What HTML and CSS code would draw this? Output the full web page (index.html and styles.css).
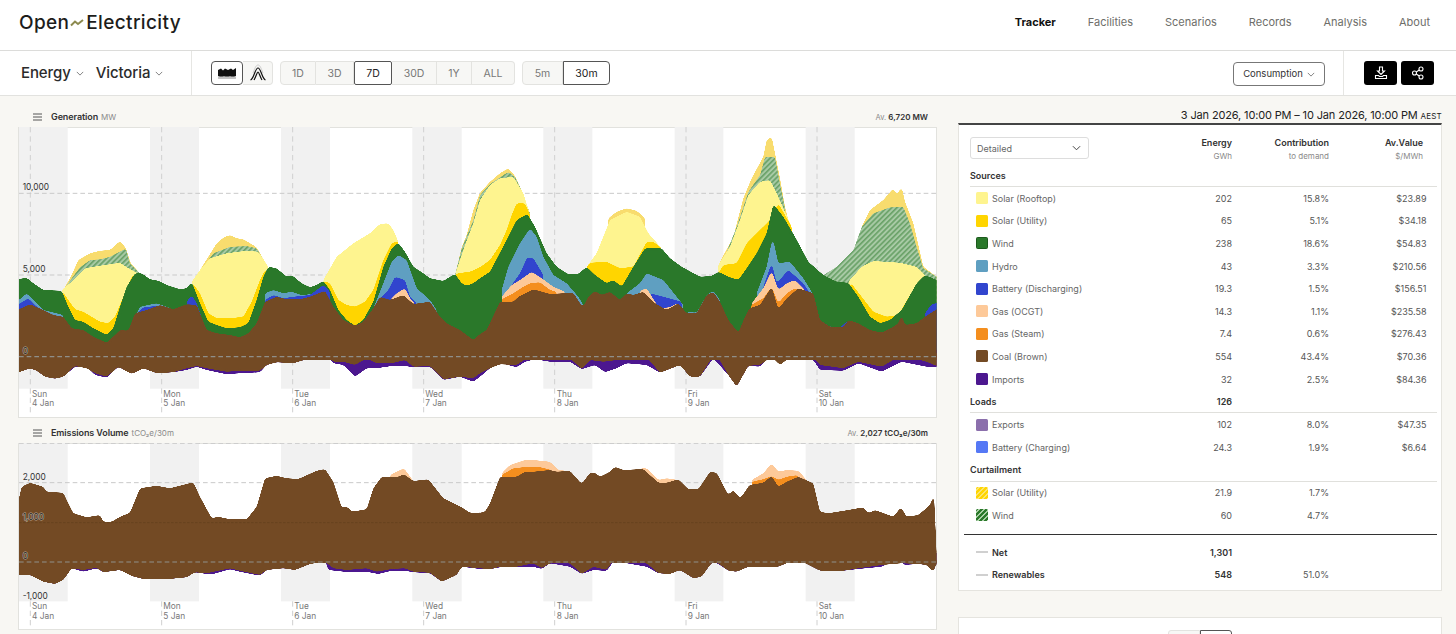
FILE: index.html
```html
<!DOCTYPE html>
<html lang="en">
<head>
<meta charset="utf-8">
<title>Open Electricity Tracker</title>
<link rel="stylesheet" href="styles.css">
</head>
<body>
<header class="topbar">
  <div class="logo">Open<svg class="logo-mark" viewBox="0 0 14 8"><path d="M1 6.500 5 2.500 8 5 13 1" /></svg>Electricity</div>
  <nav class="nav">
    <a class="nav-active">Tracker</a><a>Facilities</a><a>Scenarios</a><a>Records</a><a>Analysis</a><a>About</a>
  </nav>
</header>

<section class="toolbar">
  <div class="selectors">
    <span class="sel">Energy <svg class="chev" viewBox="0 0 10 6"><path d="M1 1 5 5 9 1"/></svg></span>
    <span class="sel">Victoria <svg class="chev" viewBox="0 0 10 6"><path d="M1 1 5 5 9 1"/></svg></span>
  </div>
  <div class="controls">
    <div class="btn-group">
      <button class="btn btn-icon btn-on"><svg width="18" height="13" viewBox="0 0 18 13"><path class="ico-fill" d="M0 3 3 1.500 5 3.500 7 1.500 10 3 13 1.500 15 3 18 1V9L15 10.500 12 9.500 9 10.500 6 9.500 3 10.500 0 9Z"/><path class="ico-grey" d="M0 9.500H18V12H0Z"/></svg></button>
      <button class="btn btn-icon"><svg width="18" height="18" viewBox="0 0 18 18"><path class="ico-line" d="M1.500 16C5 15 6 4 9 4S13 15 16.500 16"/><path class="ico-line" d="M5 16C7 13 8 8 9 8S11 13 13 16"/><path class="ico-pale" d="M4 9C6 4 7 1 9 1S12 4 14 9"/></svg></button>
    </div>
    <div class="btn-group">
      <button class="btn w36">1D</button><button class="btn w38">3D</button><button class="btn w38 btn-on">7D</button><button class="btn w45">30D</button><button class="btn w35">1Y</button><button class="btn w43">ALL</button>
    </div>
    <div class="btn-group">
      <button class="btn w41">5m</button><button class="btn w47 btn-on">30m</button>
    </div>
  </div>
  <button class="consumption">Consumption <svg class="chev" viewBox="0 0 10 6"><path d="M1 1 5 5 9 1"/></svg></button>
  <div class="actions">
    <button class="black-btn"><svg width="14" height="14" viewBox="0 0 14 14"><path class="ico-white" d="M5.500 1H8.500V5H10.500L7 8.500 3.500 5H5.500Z"/><path class="ico-white" d="M1.500 9.500H4.500L5.500 10.500H8.500L9.500 9.500H12.500V12.500H1.500Z"/></svg></button>
    <button class="black-btn"><svg width="14" height="14" viewBox="0 0 14 14"><circle class="ico-white" cx="10" cy="3" r="2"/><circle class="ico-white" cx="3.500" cy="7" r="2"/><circle class="ico-white" cx="10" cy="11" r="2"/><path class="ico-white" d="M5.300 6 8.200 4M5.300 8 8.200 10"/></svg></button>
  </div>
</section>

<main class="main">
  <div class="charts">
    <div class="chart-head head-one">
      <svg class="burger" viewBox="0 0 9 8"><path d="M0 1H9M0 4H9M0 7H9"/></svg>
      <span class="chart-title">Generation</span> <span class="chart-unit">MW</span>
      <span class="chart-av">Av. <b>6,720 MW</b></span>
    </div>
    <div class="chart-panel panel-gen">
      <svg class="chart-svg" width="919" height="291" viewBox="54 21 2757 873">
        <defs>
          <pattern id="hatch" patternUnits="userSpaceOnUse" width="11" height="11" patternTransform="rotate(45)">
            <rect width="11" height="11" fill="#a8caa5"/><rect width="5" height="11" fill="#6aa268"/>
          </pattern>
          <filter id="s" filterUnits="userSpaceOnUse" x="-100" y="0" width="3100" height="1000" color-interpolation-filters="sRGB">
            <feGaussianBlur stdDeviation="5"/>
            <feComponentTransfer><feFuncA type="linear" slope="14" intercept="-6.500"/></feComponentTransfer>
          </filter>
          <filter id="sh" filterUnits="userSpaceOnUse" x="-100" y="0" width="3100" height="1000" color-interpolation-filters="sRGB">
            <feGaussianBlur in="SourceAlpha" stdDeviation="5"/>
            <feComponentTransfer result="edge"><feFuncA type="linear" slope="14" intercept="-6.500"/></feComponentTransfer>
            <feComposite in="SourceGraphic" in2="edge" operator="in"/>
          </filter>
          <clipPath id="cl"><rect x="57" y="0" width="1383" height="1000"/></clipPath>
          <clipPath id="cr"><rect x="30" y="0" width="1370" height="1000"/></clipPath>
        </defs>
        <g class="bands">
          <rect x="57" y="21" width="146" height="785"/><rect x="450" y="21" width="147" height="785"/><rect x="843" y="21" width="147" height="785"/><rect x="1237" y="21" width="148" height="785"/><rect x="1630" y="21" width="147" height="785"/><rect x="2024" y="21" width="146" height="785"/><rect x="2417" y="21" width="147" height="785"/>
        </g>
        <path class="vgrid" d="M91 21V880M485 21V880M878 21V880M1271 21V880M1664 21V880M2058 21V880M2451 21V880"/>
        <path class="hgrid-light" d="M57 220H2808M57 465H2808"/>
        <g clip-path="url(#cl)">
          <path class="c-solarc" filter="url(#s)" d="M190,510 215,465 235,420 270,400 300,392 330,390 360,363 378,385 392,430 420,460V700H190Z M600,450 625,410 650,370 672,352 690,345 710,355 730,358 770,382 800,435V700H600Z M1365,465 1385,382 1400,345 1420,270 1440,218 1480,178V700H1365Z"/>
          <path fill="url(#hatch)" filter="url(#sh)" d="M190,510 215,475 240,442 270,420 300,418 330,410 378,385 390,430 420,460V700H190Z M610,440 640,400 690,380 740,378 770,385 800,435V700H610Z M1365,465 1385,385 1420,300 1440,225 1480,185V700H1365Z"/>
          <path class="c-roof" filter="url(#s)" d="M185,510 215,485 255,445 300,437 360,428 385,445 418,462V700H185Z M575,485 600,450 630,415 680,400 740,392 775,395 805,440V700H575Z M970,480 1010,410 1060,370 1110,340 1140,312 1165,310 1180,330 1195,365V700H970Z M1368,455 1395,375 1420,310 1440,240 1480,190V700H1368Z"/>
          <path class="c-util" filter="url(#s)" d="M185,510 205,540 225,568 250,575 275,590 300,605 325,610 345,590 370,530 395,470 410,460V700H185Z M575,485 600,520 625,580 650,595 690,595 730,590 755,545 780,480 800,440V700H575Z M970,482 990,490 1015,540 1040,555 1065,560 1095,545 1120,510 1150,420 1175,370 1195,362V700H970Z M1365,462 1385,458 1410,455 1440,442 1480,405V700H1365Z"/>
          <path class="c-wind" filter="url(#s)" d="M40,477 57,477 80,473 100,490 130,510 185,512 205,560 225,600 250,605 280,625 320,645 340,625 360,560 380,500 405,460 425,460 450,478 475,482 500,495 540,508 560,505 575,485 600,550 625,605 650,615 680,625 720,622 745,610 770,540 790,470 805,440 830,445 860,470 875,465 905,490 930,502 950,495 970,482 990,510 1015,570 1040,600 1065,617 1090,600 1120,545 1150,440 1175,385 1195,368 1215,395 1240,440 1270,460 1290,475 1330,483 1350,470 1365,462 1385,490 1400,497 1420,490 1440,475 1480,445V700H40Z"/>
          <path class="c-hydro" filter="url(#s)" d="M40,545 57,540 80,520 100,540 130,570 190,585V700H40Z M400,600 420,560 470,550 520,568V700H400Z M795,520 820,510 850,520 875,515 910,527 935,520V700H795Z M1120,565 1150,490 1175,425 1195,405 1220,420 1250,505 1290,540 1310,570V700H1120Z"/>
          <path class="c-batt" filter="url(#s)" d="M40,556 57,552 85,535 110,560 130,570V700H40Z M410,580 430,562 470,558 500,565V700H410Z M560,545 575,525 590,550 615,620V700H560Z M795,540 820,525 850,535 880,530 930,525 970,495 990,515V700H795Z M1140,535 1165,510 1185,470 1215,480 1230,530 1250,550V700H1140Z"/>
          <path class="c-ocgt" filter="url(#s)" d="M1170,540 1190,520 1215,505 1230,535 1245,552V700H1170Z"/>
          <path class="c-imp" filter="url(#s)" d="M40,757 57,757 90,745 110,752 135,770 165,776 190,770 225,740 260,740 285,765 320,773 355,740 395,762 430,745 470,760 520,757 560,750 590,740 620,750 680,763 720,760 780,757 800,735 830,727 880,730 930,715 975,700 1000,730 1030,735 1065,770 1100,745 1130,745 1175,738 1215,738 1240,742 1290,740 1330,780 1380,770 1420,785 1440,770 1480,740V690H40Z"/>
          <path class="c-coal" filter="url(#s)" d="M40,570 57,568 90,553 130,570 160,585 190,590 215,625 250,630 280,650 320,668 345,645 360,630 385,632 405,580 440,570 480,555 520,568 560,553 590,555 620,630 650,640 690,645 720,652 745,640 770,610 795,545 830,530 860,538 900,538 930,530 975,512 1000,560 1030,600 1065,617 1090,605 1120,565 1140,530 1170,540 1210,525 1240,552 1290,545 1320,590 1340,610 1380,630 1420,660 1440,642 1480,625V720H40Z"/>
          <path class="c-coal" filter="url(#s)" d="M40,757 57,757 90,745 110,752 135,770 165,776 190,770 225,738 260,745 285,760 320,770 355,740 395,762 430,745 470,760 520,757 560,745 590,738 620,745 680,755 720,752 780,752 800,735 830,727 880,730 930,715 975,705 1000,725 1030,725 1065,735 1100,715 1130,730 1175,730 1215,720 1240,740 1290,738 1330,778 1380,770 1420,775 1440,760 1480,745V700H40Z"/>
        </g>
        <g transform="translate(1410 0)" clip-path="url(#cr)">
          <path class="c-solarc" filter="url(#s)" d="M-10,330 30,218 60,185 90,160 115,145 135,168 150,200 180,280V700H-10Z M415,295 440,275 470,265 500,272 525,295V700H415Z M745,435 790,350 820,235 845,175 880,110 890,60 905,50 915,100 930,175 945,260 960,320V700H745Z M1175,320 1200,270 1240,240 1270,205 1280,225 1295,200 1305,245 1330,310 1360,440 1400,470 1420,475V700H1175Z"/>
          <path fill="url(#hatch)" filter="url(#sh)" d="M-10,345 30,225 60,192 90,172 115,155 135,170 150,200 180,280V700H-10Z M760,420 800,320 835,215 870,165 885,110 915,110 930,190 945,265V700H760Z M1060,465 1100,440 1135,405 1150,390 1175,320 1210,280 1260,262 1300,260 1320,310 1340,380 1360,445 1400,470 1420,475V700H1060Z"/>
          <path class="c-roof" filter="url(#s)" d="M-10,340 30,240 60,195 90,175 130,170 160,220 180,285V700H-10Z M350,440 380,400 420,300 470,275 510,290 535,340 575,385V700H350Z M745,435 780,380 810,300 835,225 870,185 900,180 920,220 965,320V700H745Z M1135,485 1175,440 1210,423 1290,428 1340,440 1365,465V700H1135Z"/>
          <path class="c-util" filter="url(#s)" d="M-10,455 30,442 60,420 90,375 110,330 125,285 140,250 165,250 180,285V700H-10Z M350,440 360,428 410,425 450,445 490,440 530,365 550,365 575,385V700H350Z M745,460 760,435 800,430 830,370 860,340 900,300 925,250 965,320V700H745Z M1140,485 1175,530 1210,575 1250,590 1285,585 1320,525 1365,462V700H1140Z"/>
          <path class="c-wind" filter="url(#s)" d="M-10,497 30,475 60,455 110,360 140,300 172,282 195,320 230,400 260,440 295,463 325,462 350,440 375,465 410,490 430,480 455,500 490,440 525,385 575,385 600,415 635,440 690,470 725,468 745,455 775,470 805,480 830,445 860,400 890,340 910,252 940,290 975,350 1015,425 1060,465 1100,485 1135,488 1165,530 1200,590 1230,610 1260,600 1295,570 1340,490 1365,465 1400,480 1420,482V700H-10Z"/>
          <path class="c-hydro" filter="url(#s)" d="M95,510 115,440 150,370 180,325 200,350 220,410 250,465 290,490 325,530 340,555V700H95Z M470,520 510,490 530,460 580,480 620,530 640,555V700H470Z M650,575 680,578 710,525 730,512 750,540V700H650Z M860,520 890,440 908,352 925,430 960,425 1000,475 1025,515 1050,600 1080,620 1110,622V700H860Z"/>
          <path class="c-batt" filter="url(#s)" d="M100,530 150,460 172,412 190,415 220,465V700H100Z M540,520 580,530 635,545V700H540Z M880,500 905,428 920,490 955,450 1000,490 1020,520 1050,600 1080,620 1110,623 1135,600V700H880Z M1365,580 1385,552 1400,550 1420,545V700H1365Z"/>
          <path class="c-ocgt" filter="url(#s)" d="M95,530 125,495 150,480 185,455 215,475 250,500 285,515V700H95Z M510,512 530,505 555,545 570,565 600,562 625,548V700H510Z M845,550 880,505 905,452 925,510 950,490 975,480 1005,510V700H845Z"/>
          <path class="c-steam" filter="url(#s)" d="M95,538 130,520 160,500 180,490 210,487 240,510 260,515V700H95Z M843,555 880,535 905,500 925,550 950,520 975,505 1000,510V700H843Z"/>
          <path class="c-imp" filter="url(#s)" d="M-10,785 30,770 60,745 95,730 140,742 165,725 195,718 240,725 300,725 335,748 375,735 405,757 440,745 470,730 530,735 570,758 630,735 660,770 690,770 730,715 775,765 800,800 835,737 870,740 905,700 930,735 960,710 990,705 1030,720 1050,750 1120,752 1165,730 1235,755 1295,725 1370,740 1400,740 1420,740V690H-10Z"/>
          <path class="c-coal" filter="url(#s)" d="M-10,660 30,642 50,630 90,545 130,545 145,530 190,508 240,522 310,518 330,550 340,560 355,530 375,513 395,525 420,515 450,540 470,520 490,525 520,515 555,550 590,570 625,550 650,580 680,580 710,525 730,515 750,545 775,600 805,638 825,590 838,565 870,555 905,500 925,568 950,535 985,505 1030,520 1050,600 1080,620 1120,622 1135,600 1165,610 1200,630 1235,638 1270,620 1285,610 1295,585 1305,615 1340,610 1365,590 1400,568 1420,560V720H-10Z"/>
          <path class="c-coal" filter="url(#s)" d="M-10,775 30,760 60,745 90,733 140,735 170,715 195,708 240,715 300,715 335,748 360,720 400,725 440,720 470,720 530,712 570,758 630,735 660,770 690,770 725,715 740,705 775,765 800,800 835,737 870,735 905,710 930,735 960,712 990,712 1030,712 1050,735 1120,745 1165,725 1235,740 1295,705 1370,725 1400,738 1420,738V700H-10Z"/>
        </g>
        <path class="hgrid-zero" d="M57 710H2808"/>
        <g class="ylab">
          <text x="68" y="210">10,000</text><text x="68" y="455">5,000</text><text class="ylab-halo" x="68" y="701">0</text>
        </g>
        <g class="xlab">
          <text x="96" y="830">Sun</text><text x="96" y="859">4 Jan</text>
          <text x="490" y="830">Mon</text><text x="490" y="859">5 Jan</text>
          <text x="883" y="830">Tue</text><text x="883" y="859">6 Jan</text>
          <text x="1276" y="830">Wed</text><text x="1276" y="859">7 Jan</text>
          <text x="1670" y="830">Thu</text><text x="1670" y="859">8 Jan</text>
          <text x="2063" y="830">Fri</text><text x="2063" y="859">9 Jan</text>
          <text x="2456" y="830">Sat</text><text x="2456" y="859">10 Jan</text>
        </g>
      </svg>
    </div>

    <div class="chart-head head-two">
      <svg class="burger" viewBox="0 0 9 8"><path d="M0 1H9M0 4H9M0 7H9"/></svg>
      <span class="chart-title">Emissions Volume</span> <span class="chart-unit">tCO₂e/30m</span>
      <span class="chart-av">Av. <b>2,027 tCO₂e/30m</b></span>
    </div>
    <div class="chart-panel panel-em">
      <svg class="chart-svg" width="919" height="187" viewBox="54 69 2757 561">
        <g class="bands">
          <rect x="57" y="69" width="146" height="475"/><rect x="450" y="69" width="147" height="475"/><rect x="843" y="69" width="147" height="475"/><rect x="1237" y="69" width="148" height="475"/><rect x="1630" y="69" width="147" height="475"/><rect x="2024" y="69" width="146" height="475"/><rect x="2417" y="69" width="147" height="475"/>
        </g>
        <path class="vgrid" d="M91 544V620M485 544V620M878 544V620M1271 544V620M1664 544V620M2058 544V620M2451 544V620"/>
        <path class="hgrid-light" d="M57 70H2808M57 188H2808"/>
        <g clip-path="url(#cl)">
          <path class="c-ocgt" filter="url(#s)" d="M1170,165 1190,155 1212,145 1240,183V300H1170Z"/>
          <path class="c-imp" filter="url(#s)" d="M40,465 57,465 90,465 130,485 165,492 190,480 215,445 250,455 290,445 310,457 360,450 395,468 430,477 500,478 560,472 585,457 620,462 640,462 690,448 720,455 780,467 800,450 850,445 885,450 930,432 975,420 985,450 1040,456 1100,455 1135,462 1175,452 1215,452 1240,457 1290,460 1325,485 1370,465 1385,440 1440,447 1480,445V420H40Z"/>
          <path class="c-coal" filter="url(#s)" d="M40,300 57,235 65,200 90,188 130,200 140,215 190,218 200,240 220,280 260,292 300,285 310,305 335,305 360,290 390,278 420,205 470,197 510,205 580,187 600,230 635,295 655,290 690,298 740,298 770,260 795,175 830,167 860,175 895,177 950,152 975,147 1000,185 1025,262 1045,262 1055,275 1100,268 1120,205 1145,170 1190,172 1212,163 1240,183 1285,178 1330,235 1385,262 1410,278 1440,278 1480,260V430H40Z"/>
          <path class="c-coal" filter="url(#s)" d="M40,465 57,465 90,465 130,485 165,492 190,480 215,445 250,450 290,443 310,457 360,450 395,468 430,477 500,478 560,472 585,457 620,460 690,445 720,452 780,465 800,450 850,445 885,450 930,432 975,425 1000,445 1040,450 1100,445 1130,455 1175,447 1215,445 1240,455 1290,458 1325,485 1370,465 1385,440 1440,445 1480,448V420H40Z"/>
        </g>
        <g transform="translate(1410 0)" clip-path="url(#cr)">
          <path class="c-ocgt" filter="url(#s)" d="M95,160 120,135 165,120 190,120 240,125 265,150 290,152V300H95Z M510,145 530,145 565,180 590,175 625,180V300H510Z M845,180 880,160 905,130 925,155 950,150 985,152 1010,180V300H845Z"/>
          <path class="c-steam" filter="url(#s)" d="M95,165 130,145 175,140 205,140 245,150V300H95Z M845,185 880,178 905,168 925,180 950,170 985,165V300H845Z"/>
          <path class="c-imp" filter="url(#s)" d="M-10,447 30,447 60,448 90,442 140,442 190,440 215,447 240,430 300,440 335,462 370,450 410,453 430,425 470,430 530,440 565,460 600,462 630,450 670,475 695,470 720,435 730,425 745,432 775,452 800,455 835,440 880,440 925,440 960,425 985,418 1010,432 1050,452 1120,452 1165,447 1235,440 1295,412 1300,435 1345,432 1370,435 1390,455 1400,430 1420,430V400H-10Z"/>
          <path class="c-coal" filter="url(#s)" d="M-10,280 30,278 45,275 60,250 90,170 140,170 165,155 190,155 240,150 260,155 300,152 335,192 360,158 375,158 390,170 420,155 435,140 460,150 520,147 565,188 590,188 625,178 655,208 685,208 720,155 740,158 775,225 790,210 810,235 825,215 838,195 880,188 905,168 925,200 950,185 985,170 1030,190 1050,275 1075,280 1135,270 1180,262 1195,280 1215,270 1270,290 1293,262 1310,290 1345,285 1380,255 1392,222 1400,400 1420,400V430H-10Z"/>
          <path class="c-coal" filter="url(#s)" d="M-10,445 30,445 60,448 90,440 140,440 190,430 215,445 240,430 300,430 335,462 370,440 410,450 430,420 470,425 530,430 565,460 600,462 630,450 670,475 695,470 720,435 730,425 745,430 775,452 800,455 835,440 880,440 925,440 960,425 985,420 1010,432 1050,452 1120,452 1165,445 1235,435 1295,430 1345,432 1370,435 1390,455 1400,430 1420,430V420H-10Z"/>
        </g>
        <path class="hgrid-thin" d="M57 308H2808"/>
        <path class="hgrid-zero" d="M57 426H2808"/>
        <g class="ylab">
          <text x="68" y="180">2,000</text><text class="ylab-halo" x="68" y="300">1,000</text><text class="ylab-halo" x="68" y="418">0</text><text x="68" y="536">-1,000</text>
        </g>
        <g class="xlab">
          <text x="96" y="568">Sun</text><text x="96" y="597">4 Jan</text>
          <text x="490" y="568">Mon</text><text x="490" y="597">5 Jan</text>
          <text x="883" y="568">Tue</text><text x="883" y="597">6 Jan</text>
          <text x="1276" y="568">Wed</text><text x="1276" y="597">7 Jan</text>
          <text x="1670" y="568">Thu</text><text x="1670" y="597">8 Jan</text>
          <text x="2063" y="568">Fri</text><text x="2063" y="597">9 Jan</text>
          <text x="2456" y="568">Sat</text><text x="2456" y="597">10 Jan</text>
        </g>
      </svg>
    </div>
  </div>

  <aside class="side">
    <div class="date-range">3 Jan 2026, 10:00 PM – 10 Jan 2026, 10:00 PM <span class="tz">AEST</span></div>
    <div class="summary">
      <div class="sum-head">
        <div class="select-box">Detailed <svg class="select-chev" viewBox="0 0 10 6"><path d="M1 1 5 5 9 1"/></svg></div>
        <div class="col-h col-energy"><b>Energy</b><span>GWh</span></div>
        <div class="col-h col-contrib"><b>Contribution</b><span>to demand</span></div>
        <div class="col-h col-value"><b>Av.Value</b><span>$/MWh</span></div>
      </div>
      <div class="section"><span>Sources</span></div>
      <div class="row"><span class="name"><i class="sw sw-roof"></i>Solar (Rooftop)</span><span>202</span><span>15.8%</span><span>$23.89</span></div>
      <div class="row"><span class="name"><i class="sw sw-util"></i>Solar (Utility)</span><span>65</span><span>5.1%</span><span>$34.18</span></div>
      <div class="row"><span class="name"><i class="sw sw-wind"></i>Wind</span><span>238</span><span>18.6%</span><span>$54.83</span></div>
      <div class="row"><span class="name"><i class="sw sw-hydro"></i>Hydro</span><span>43</span><span>3.3%</span><span>$210.56</span></div>
      <div class="row"><span class="name"><i class="sw sw-batt"></i>Battery (Discharging)</span><span>19.3</span><span>1.5%</span><span>$156.51</span></div>
      <div class="row"><span class="name"><i class="sw sw-ocgt"></i>Gas (OCGT)</span><span>14.3</span><span>1.1%</span><span>$235.58</span></div>
      <div class="row"><span class="name"><i class="sw sw-steam"></i>Gas (Steam)</span><span>7.4</span><span>0.6%</span><span>$276.43</span></div>
      <div class="row"><span class="name"><i class="sw sw-coal"></i>Coal (Brown)</span><span>554</span><span>43.4%</span><span>$70.36</span></div>
      <div class="row"><span class="name"><i class="sw sw-imp"></i>Imports</span><span>32</span><span>2.5%</span><span>$84.36</span></div>
      <div class="section"><span>Loads</span><span class="sec-val">126</span></div>
      <div class="row"><span class="name"><i class="sw sw-exp"></i>Exports</span><span>102</span><span>8.0%</span><span>$47.35</span></div>
      <div class="row"><span class="name"><i class="sw sw-chg"></i>Battery (Charging)</span><span>24.3</span><span>1.9%</span><span>$6.64</span></div>
      <div class="section"><span>Curtailment</span></div>
      <div class="row"><span class="name"><i class="sw sw-util-h"></i>Solar (Utility)</span><span>21.9</span><span>1.7%</span><span></span></div>
      <div class="row"><span class="name"><i class="sw sw-wind-h"></i>Wind</span><span>60</span><span>4.7%</span><span></span></div>
      <div class="totals">
        <div class="row row-total"><span class="name"><i class="dash"></i>Net</span><span>1,301</span><span></span><span></span></div>
        <div class="row row-total"><span class="name"><i class="dash"></i>Renewables</span><span>548</span><span class="plain">51.0%</span><span></span></div>
      </div>
    </div>
    <div class="next-panel">
      <div class="mini-group"><button class="mini"></button><button class="mini mini-on"></button></div>
    </div>
  </aside>
</main>
</body>
</html>
```

FILE: styles.css
```css
* { box-sizing: border-box; }
html, body { margin: 0; height: 634px; overflow: hidden; }
body { font-family: "Inter", "Liberation Sans", sans-serif; background: #f8f7f3; color: #333; display: flex; flex-direction: column; }
button { font-family: inherit; cursor: pointer; padding: 0; }

.topbar { height: 51px; background: #fff; border-bottom: 1px solid #dcdcda; display: flex; align-items: center; justify-content: space-between; padding: 0 26px 6px 19px; flex: none; }
.logo { font-size: 19px; font-weight: 500; letter-spacing: 0.35px; color: #1d1d1b; display: flex; align-items: center; }
.logo-mark { width: 14px; height: 8px; margin: 2px 2px 0 1px; }
.logo-mark path { fill: none; stroke: #8c8a4e; stroke-width: 2; }
.nav { display: flex; gap: 32px; font-size: 11px; color: #6e6e6a; }
.nav-active { color: #111; font-weight: 700; }

.toolbar { height: 45px; background: #fff; border-bottom: 1px solid #e2e2df; display: flex; align-items: stretch; flex: none; }
.selectors { width: 192px; border-right: 1px solid #e6e6e3; padding: 0 0 1px 21px; display: flex; align-items: center; gap: 12px; }
.sel { font-size: 15px; font-weight: 500; color: #2b2b2b; display: flex; align-items: center; gap: 5px; letter-spacing: -0.1px; }
.chev { width: 8px; height: 5px; margin-top: 2px; }
.chev path { fill: none; stroke: #666; stroke-width: 1; }
.controls { display: flex; gap: 7px; align-items: center; padding-left: 19px; flex: 1; }
.btn-group { display: flex; height: 24px; }
.btn { height: 24px; background: #f7f7f5; border: 1px solid #e3e3e0; border-left-width: 0; font-size: 10.500px; color: #777; display: flex; align-items: center; justify-content: center; }
.btn:first-child { border-left-width: 1px; border-radius: 4px 0 0 4px; }
.btn:last-child { border-radius: 0 4px 4px 0; }
.btn-on { background: #fff; color: #222; border: 1px solid #555; border-radius: 2px; }
.btn-icon { width: 30px; }
.btn-icon:first-child { width: 32px; border-radius: 4px; }
.w35 { width: 35px; } .w36 { width: 36px; } .w38 { width: 38px; } .w41 { width: 41px; } .w43 { width: 43px; } .w45 { width: 45px; } .w47 { width: 47px; }
.btn-group .btn-on:last-child { border-radius: 0 4px 4px 0; }
.ico-fill { fill: #111; }
.ico-grey { fill: #c4c4c4; }
.ico-line { fill: none; stroke: #111; stroke-width: 1.200; }
.ico-pale { fill: none; stroke: #ccc; stroke-width: 1; }
.consumption { width: 92px; height: 24px; align-self: center; margin-top: 1px; background: #fff; border: 1px solid #777; border-radius: 4px; font-size: 9.500px; color: #333; display: flex; align-items: center; justify-content: center; gap: 4px; }
.actions { margin-left: 18px; width: 113px; border-left: 1px solid #e6e6e3; display: flex; align-items: center; gap: 4px; padding: 0 0 1px 20px; }
.black-btn { width: 33px; height: 24px; background: #000; border: 0; border-radius: 3px; display: flex; align-items: center; justify-content: center; }
.ico-white { fill: none; stroke: #fff; stroke-width: 1.100; }

.main { display: grid; grid-template-columns: 919px 484px; column-gap: 21px; padding-left: 18px; flex: 1; min-height: 0; }
.charts { display: flex; flex-direction: column; }
.chart-head { display: flex; align-items: baseline; gap: 3px; padding: 0 9px 0 15px; font-size: 9px; }
.head-one { height: 31px; padding-top: 15px; }
.head-two { height: 25px; padding-top: 9px; }
.burger { width: 9px; height: 8px; margin-right: 6px; align-self: flex-start; margin-top: 2px; }
.burger path { stroke: #555; stroke-width: 1; fill: none; }
.chart-title { font-weight: 600; color: #333; font-size: 9px; letter-spacing: -0.1px; }
.chart-unit { color: #8a8a8a; font-size: 8px; }
.chart-av { margin-left: auto; color: #8a8a8a; font-size: 7.500px; }
.chart-av b { color: #333; font-weight: 600; font-size: 8px; }
.chart-panel { background: #fff; box-shadow: inset 0 0 0 1px #e2e2de; }
.panel-gen { height: 291px; }
.panel-em { height: 187px; }
.chart-svg { display: block; }

.bands rect { fill: #f1f1f1; }
.vgrid { stroke: #d0d0d0; stroke-width: 3; stroke-dasharray: 16 12; fill: none; }
.hgrid-light { stroke: #c9c9c9; stroke-width: 3; stroke-dasharray: 14 9; fill: none; }
.hgrid-zero { stroke: #8f8f8a; stroke-width: 3.500; stroke-dasharray: 14 9; fill: none; }
.hgrid-thin { stroke: #5d3a1b; stroke-width: 1.500; stroke-dasharray: 8 4; fill: none; }
.ylab text { font-size: 25px; fill: #333; }
.ylab .ylab-halo { stroke: rgba(255, 255, 255, 0.55); stroke-width: 3; paint-order: stroke; fill: #2a2a2a; }
.xlab text { font-size: 25px; fill: #777; }

.c-solarc { fill: #f8dc6e; }
.c-roof { fill: #fef48f; }
.c-util { fill: #ffd500; }
.c-wind { fill: #2a782a; }
.c-hydro { fill: #5f9fc1; }
.c-batt { fill: #3145ce; }
.c-ocgt { fill: #fdc999; }
.c-steam { fill: #f48e1e; }
.c-coal { fill: #734a24; }
.c-imp { fill: #4c178f; }

.side { display: flex; flex-direction: column; }
.date-range { height: 27px; padding-top: 12px; text-align: right; font-size: 11px; color: #222; white-space: nowrap; letter-spacing: -0.15px; }
.tz { font-size: 8px; letter-spacing: 0.2px; }
.summary { height: 468px; flex: none; background: #fff; border: 1px solid #e5e4df; border-top: 2px solid #444; padding: 12px 4px 0 11px; }
.sum-head { display: grid; grid-template-columns: 119px 143px 97px 94px; height: 27px; }
.select-box { height: 22px; border: 1px solid #ddd; border-radius: 3px; font-size: 9px; color: #666; display: flex; align-items: center; justify-content: space-between; padding: 0 7px 0 6px; }
.select-chev { width: 9px; height: 6px; }
.select-chev path { fill: none; stroke: #444; stroke-width: 1.100; }
.col-h { display: flex; flex-direction: column; text-align: right; font-size: 9px; gap: 3px; }
.col-h b { font-weight: 600; color: #333; }
.col-h span { font-size: 8px; color: #8a8a8a; }
.section { height: 23px; border-bottom: 1px solid #e0e0dc; display: grid; grid-template-columns: 200px 62px; align-items: center; font-size: 9px; font-weight: 600; color: #333; }
.sec-val { text-align: right; }
.row { height: 22.600px; display: grid; grid-template-columns: 200px 62px 97px 97.500px; align-items: center; font-size: 9px; color: #555; }
.row > span { text-align: right; }
.row > .name { text-align: left; display: flex; align-items: center; gap: 4px; padding-left: 6px; color: #666; white-space: nowrap; }
.sw { width: 12px; height: 12px; border-radius: 1.500px; display: block; flex: none; }
.sw-roof { background: #fef48f; }
.sw-util { background: #ffd500; }
.sw-wind { background: #2a782a; border: 1px solid #1d5a1d; }
.sw-hydro { background: #5f9fc1; }
.sw-batt { background: #3145ce; }
.sw-ocgt { background: #fdc999; }
.sw-steam { background: #f48e1e; }
.sw-coal { background: #734a24; }
.sw-imp { background: #4c178f; }
.sw-exp { background: #8b6fac; }
.sw-chg { background: #5578f5; }
.sw-util-h { background: repeating-linear-gradient(135deg, #ffd500 0 2px, #fbe56f 2px 3.500px); }
.sw-wind-h { background: repeating-linear-gradient(135deg, #2a782a 0 2px, #a9cfa5 2px 3.500px); }
.totals { margin: 7px 0 0 -6px; padding: 6px 0 0 6px; border-top: 1px solid #333; }
.row-total { font-weight: 600; color: #333; }
.row-total > .name { color: #333; }
.row-total > .plain { font-weight: 400; color: #555; }
.dash { width: 12px; height: 2px; background: #d0d0d0; display: block; flex: none; }
.next-panel { margin-top: 26px; height: 17px; flex: none; overflow: hidden; background: #fff; border: 1px solid #e5e4df; border-bottom: 0; padding: 12px 0 0 209px; }
.mini-group { display: flex; }
.mini { width: 32px; height: 24px; background: #f7f7f5; border: 1px solid #e3e3e0; border-radius: 3px 0 0 3px; }
.mini-on { background: #fff; border-color: #555; border-radius: 0 3px 3px 0; }
```
